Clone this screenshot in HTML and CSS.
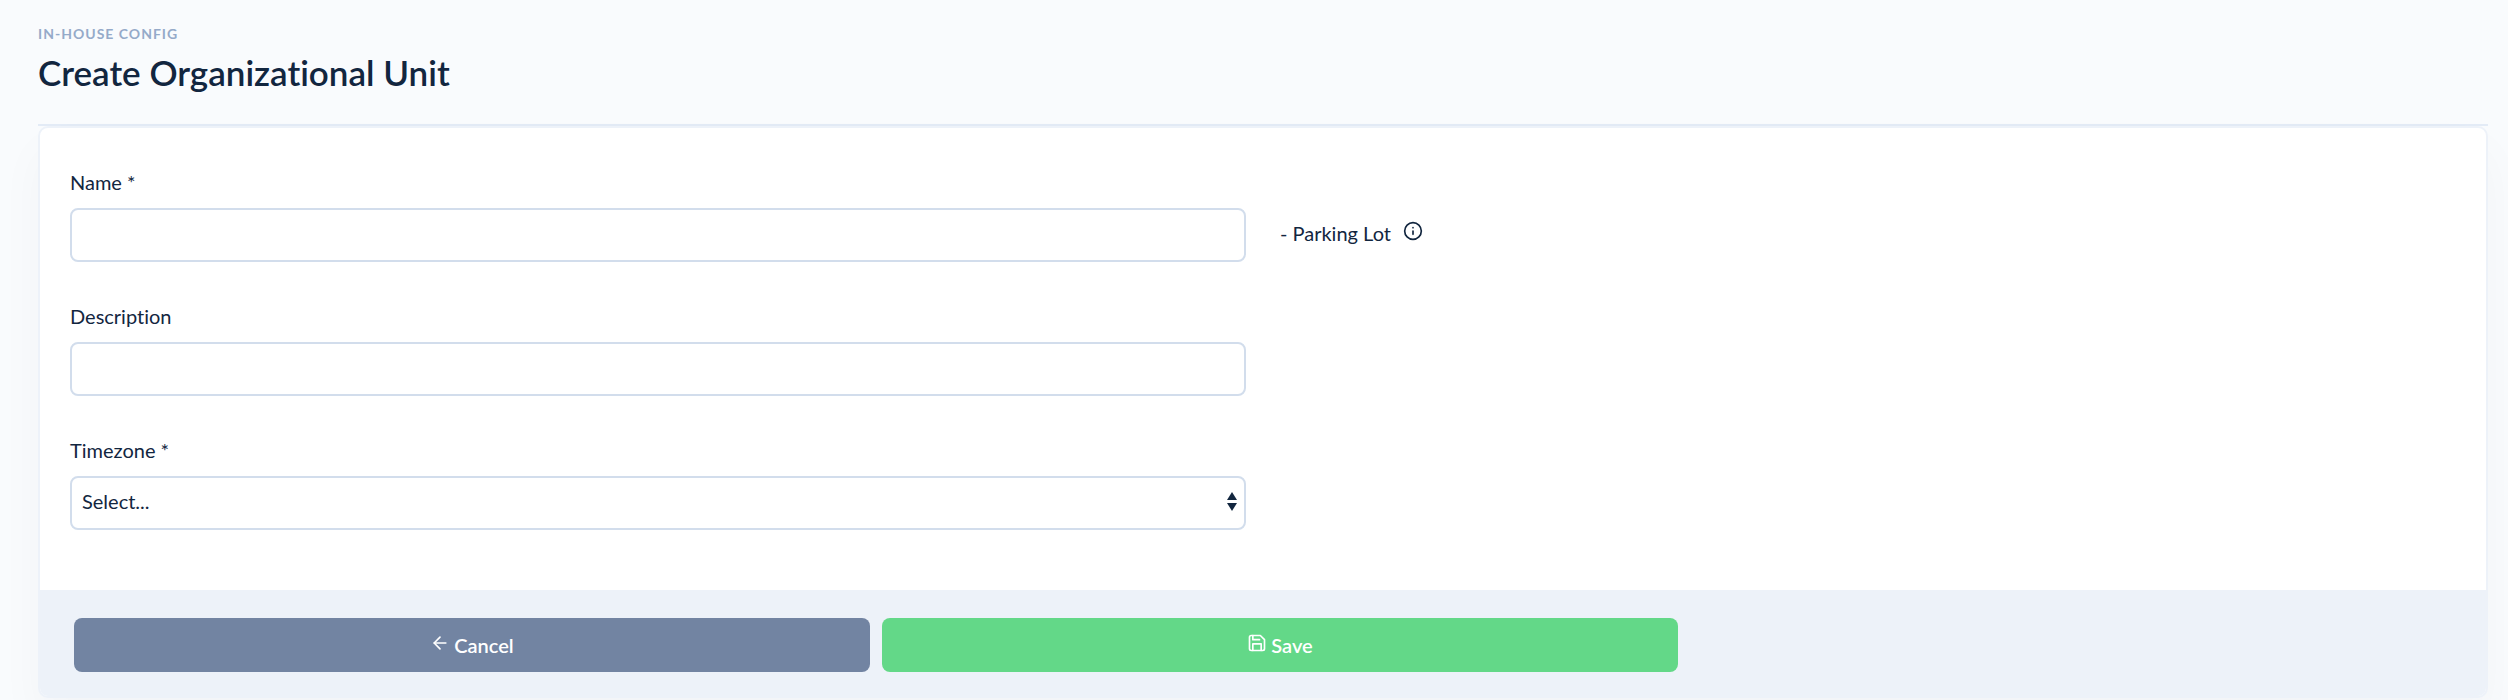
FILE: index.html
```html
<!DOCTYPE html>
<html lang="en">
<head>
    <meta charset="UTF-8">
    <meta name="viewport" content="width=device-width, initial-scale=1.0">
    <title>Create Organizational Unit</title>
    <link rel="stylesheet" href="styles.css">
</head>
<body>

    <main class="container">
        <header class="header">
            <h6 class="header-pretitle">In-house config</h6>
            <h1 class="header-title">Create Organizational Unit</h1>
        </header>

        <form class="card">
            <div class="card-body">
                <div class="form-row">
                    <div class="form-group">
                        <label for="name">Name *</label>
                        <input type="text" id="name" class="form-control" required>
                    </div>
                    <div class="form-hint">
                        <span>- Parking Lot</span>
                        <svg class="icon" viewBox="0 0 24 24">
                            <circle cx="12" cy="12" r="10"></circle>
                            <line x1="12" y1="16" x2="12" y2="12"></line>
                            <line x1="12" y1="8" x2="12.01" y2="8"></line>
                        </svg>
                    </div>
                </div>

                <div class="form-row">
                    <div class="form-group">
                        <label for="description">Description</label>
                        <input type="text" id="description" class="form-control">
                    </div>
                </div>

                <div class="form-row">
                    <div class="form-group">
                        <label for="timezone">Timezone *</label>
                        <div class="select-wrap">
                            <select id="timezone" class="form-control" required>
                                <option value="">Select...</option>
                            </select>
                            <svg class="select-arrows" viewBox="0 0 10 20">
                                <path d="M5 0L10 8H0z"></path>
                                <path d="M0 11H10L5 19z"></path>
                            </svg>
                        </div>
                    </div>
                </div>
            </div>

            <div class="card-footer">
                <button type="button" class="btn btn-secondary">
                    <svg class="icon" viewBox="0 0 24 24">
                        <line x1="19" y1="12" x2="5" y2="12"></line>
                        <polyline points="12 19 5 12 12 5"></polyline>
                    </svg>
                    Cancel
                </button>
                <button type="submit" class="btn btn-success">
                    <svg class="icon" viewBox="0 0 24 24">
                        <path d="M19 21H5a2 2 0 0 1-2-2V5a2 2 0 0 1 2-2h11l5 5v11a2 2 0 0 1-2 2z"></path>
                        <polyline points="17 21 17 13 7 13 7 21"></polyline>
                        <polyline points="7 3 7 8 15 8"></polyline>
                    </svg>
                    Save
                </button>
            </div>
        </form>
    </main>

</body>
</html>
```

FILE: styles.css
```css
* {
    box-sizing: border-box;
}

body {
    margin: 0;
    background-color: #f9fbfd;
    color: #12263f;
    font-family: Lato, "Liberation Sans", sans-serif;
    font-size: 20px;
    font-variant-ligatures: none;
    line-height: 28px;
}

.container {
    padding: 24px 20px 2px 38px;
}

.header {
    padding-bottom: 30px;
    border-bottom: 2px solid #e3ebf6;
}

.header-pretitle {
    margin: 0 0 6px;
    color: #95aac9;
    font-size: 14px;
    font-weight: 700;
    line-height: 20px;
    letter-spacing: 1px;
    text-transform: uppercase;
}

.header-title {
    margin: 0;
    font-size: 35px;
    font-weight: 600;
    line-height: 44px;
}

.card {
    background-color: #fff;
    border: 2px solid #edf2f9;
    border-radius: 10px;
    box-shadow: 0 24px 48px rgba(18, 38, 63, 0.03);
    overflow: hidden;
}

.card-body {
    display: grid;
    gap: 40px;
    padding: 40px 30px 60px;
}

.form-row {
    display: grid;
    grid-template-columns: 1fr 1fr;
    gap: 34px;
    align-items: end;
}

.form-group label {
    display: block;
    margin-bottom: 12px;
}

.form-control {
    display: block;
    width: 100%;
    height: 54px;
    padding: 0 10px 4px;
    background-color: #fff;
    color: #12263f;
    border: 2px solid #d2ddec;
    border-radius: 8px;
    font: inherit;
    appearance: none;
}

.form-hint {
    display: flex;
    align-items: center;
    gap: 12px;
    height: 54px;
    padding-bottom: 4px;
}

.select-wrap {
    position: relative;
}

.select-arrows {
    position: absolute;
    top: 16px;
    right: 9px;
    width: 10px;
    height: 20px;
    fill: #12263f;
    pointer-events: none;
}

.icon {
    width: 20px;
    height: 20px;
    margin-bottom: 4px;
    fill: none;
    stroke: currentColor;
    stroke-width: 2;
    stroke-linecap: round;
    stroke-linejoin: round;
}

.card-footer {
    display: grid;
    grid-template-columns: repeat(3, 1fr);
    gap: 12px;
    padding: 28px 0 24px 34px;
    background-color: #edf2f9;
}

.btn {
    display: flex;
    justify-content: center;
    align-items: center;
    gap: 4px;
    height: 54px;
    border: none;
    border-radius: 8px;
    color: #fff;
    font: inherit;
    font-weight: 600;
    cursor: pointer;
}

.btn-secondary {
    background-color: #7284a2;
}

.btn-success {
    background-color: #63d888;
}
```
